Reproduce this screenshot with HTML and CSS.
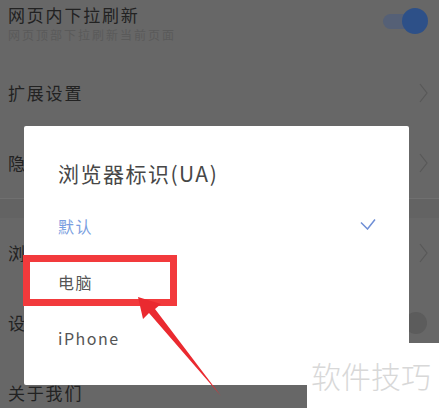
FILE: index.html
```html
<!DOCTYPE html>
<html lang="zh-CN">
<head>
<meta charset="utf-8">
<title>浏览器标识(UA)</title>
<link rel="stylesheet" href="styles.css">
</head>
<body>
<div class="screen">
  <div class="settings">
    <div class="row row-first">
      <div class="texts">
        <div class="row-title">网页内下拉刷新</div>
        <div class="row-sub">网页顶部下拉刷新当前页面</div>
      </div>
      <div class="toggle on"><span class="knob"></span></div>
    </div>
    <div class="row">
      <div class="row-title">扩展设置</div>
      <svg class="chev" width="9" height="20" viewBox="0 0 9 20"><path d="M1 1 L8 10 L1 19" fill="none" stroke="#585858" stroke-width="1.2"/></svg>
    </div>
    <div class="row">
      <div class="row-title">隐私设置</div>
      <svg class="chev" width="9" height="20" viewBox="0 0 9 20"><path d="M1 1 L8 10 L1 19" fill="none" stroke="#585858" stroke-width="1.2"/></svg>
    </div>
    <div class="band"></div>
    <div class="row">
      <div class="row-title">浏览器标识(UA)</div>
      <svg class="chev" width="9" height="20" viewBox="0 0 9 20"><path d="M1 1 L8 10 L1 19" fill="none" stroke="#585858" stroke-width="1.2"/></svg>
    </div>
    <div class="row">
      <div class="row-title">设为默认浏览器</div>
      <div class="toggle off"><span class="knob"></span></div>
    </div>
    <div class="row">
      <div class="row-title">关于我们</div>
    </div>
  </div>

  <div class="dialog">
    <div class="dlg-title">浏览器标识(UA)</div>
    <div class="opt selected">
      <span>默认</span>
      <svg width="16" height="12" viewBox="0 0 16 12"><path d="M1 4.5 L7.5 11 L15 1.5" fill="none" stroke="#6f8fd6" stroke-width="1.5"/></svg>
    </div>
    <div class="opt"><span>电脑</span></div>
    <div class="opt"><span>iPhone</span></div>
  </div>

  <div class="highlight"></div>

  <svg class="arrow" width="439" height="408" viewBox="0 0 439 408">
    <polygon points="138,297 161,304 155,309 221,396 149,313 143,319" fill="#ea2a30"/>
  </svg>

  <div class="watermark">软件技巧</div>
</div>
</body>
</html>
```

FILE: styles.css
```css
html, body {
  margin: 0;
  padding: 0;
}
body {
  width: 439px;
  height: 408px;
  overflow: hidden;
  background: #676767;
  font-family: "Noto Sans CJK SC", "Noto Sans", sans-serif;
}
.screen {
  position: relative;
  width: 439px;
  height: 408px;
  overflow: hidden;
}
.settings {
  display: flex;
  flex-direction: column;
}
.row {
  height: 70px;
  display: flex;
  align-items: center;
  justify-content: space-between;
  padding: 0 11px 0 8px;
  flex-shrink: 0;
}
.row-first {
  height: 58px;
  align-items: flex-start;
}
.row-first .texts {
  padding-top: 3px;
}
.row-title {
  font-size: 17px;
  line-height: 24px;
  letter-spacing: 1.8px;
  color: #222;
}
.row-sub {
  font-size: 12px;
  line-height: 16px;
  letter-spacing: 2px;
  color: #5a5a5a;
}
.band {
  height: 19px;
  background: #636363;
  border-top: 1px solid #707070;
}
.toggle {
  position: relative;
  width: 45px;
  height: 26px;
  display: flex;
  align-items: center;
}
.row-first .toggle {
  margin-top: 8px;
}
.toggle::before {
  content: "";
  display: block;
  width: 36px;
  height: 15px;
  border-radius: 8px;
  background: #556076;
}
.toggle .knob {
  position: absolute;
  right: 0;
  top: 0;
  width: 26px;
  height: 26px;
  border-radius: 50%;
  background: #2d5088;
}
.toggle.off::before {
  background: #606060;
}
.toggle.off .knob {
  width: 22px;
  height: 22px;
  top: 2px;
  right: 1px;
  background: #5c5c5c;
}
.dialog {
  position: absolute;
  left: 24px;
  top: 126px;
  width: 385px;
  height: 259px;
  box-sizing: border-box;
  background: #fff;
  border-radius: 2px;
  padding: 32px 33px 0 34px;
  display: flex;
  flex-direction: column;
}
.dlg-title {
  font-size: 21px;
  line-height: 30px;
  letter-spacing: 1.5px;
  color: #474747;
  margin-bottom: 10px;
}
.opt {
  height: 56px;
  display: flex;
  align-items: center;
  justify-content: space-between;
  font-size: 16px;
  letter-spacing: 1.5px;
  color: #555;
}
.opt.selected {
  color: #7a9ee0;
}
.opt.selected svg {
  margin-top: -4px;
}
.highlight {
  position: absolute;
  left: 23px;
  top: 255px;
  width: 154px;
  height: 51px;
  box-sizing: border-box;
  border: 7px solid #f23a3c;
}
.arrow {
  position: absolute;
  left: 0;
  top: 0;
}
.watermark {
  position: absolute;
  left: 307px;
  top: 343px;
  right: 0;
  bottom: 0;
  background: #fff;
  padding-left: 4px;
  font-size: 30px;
  font-weight: 300;
  line-height: 64px;
  color: #d8d8d8;
}
```
